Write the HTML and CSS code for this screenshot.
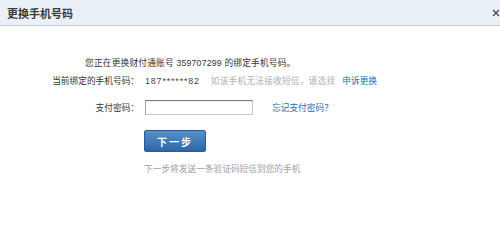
FILE: index.html
```html
<!DOCTYPE html>
<html lang="zh-CN">
<head>
<meta charset="utf-8">
<title>更换手机号码</title>
<link rel="stylesheet" href="styles.css">
</head>
<body>
<div class="dialog">
  <div class="hd">
    <span class="title">更换手机号码</span>
    <span class="close"><svg width="8" height="8" viewBox="0 0 8 8"><path d="M1 1L7 7M7 1L1 7" stroke="#4a4f57" stroke-width="1.4" fill="none"/></svg></span>
  </div>
  <div class="bd">
    <p class="intro">您正在更换财付通账号 359707299 的绑定手机号码。</p>
    <div class="row">
      <span class="label">当前绑定的手机号码：</span>
      <span class="val">187******82</span>
      <span class="tip">如该手机无法接收短信，请选择</span>
      <a class="link link-appeal" href="#">申诉更换</a>
    </div>
    <div class="row row-pwd">
      <span class="label">支付密码：</span>
      <input class="pwd" type="password">
      <a class="link link-forgot" href="#">忘记支付密码？</a>
    </div>
    <div class="actions"><button class="btn" type="button">下一步</button></div>
    <p class="note">下一步将发送一条验证码短信到您的手机</p>
  </div>
</div>
</body>
</html>
```
FILE: styles.css
```css
html, body {
  margin: 0;
  padding: 0;
  background: #fff;
}
body {
  font-family: "Liberation Sans", "Noto Sans CJK SC", sans-serif;
  font-size: 8.7px;
  color: #333;
  width: 500px;
  height: 232px;
  overflow: hidden;
}
.dialog {
  width: 500px;
}
.hd {
  height: 25px;
  background: #e9f0f8;
  border-bottom: 1px solid #c6c9cd;
  display: flex;
  align-items: center;
  justify-content: space-between;
  padding-left: 7px;
}
.title {
  font-size: 11px;
  font-weight: bold;
  color: #3a3a3a;
}
.close {
  display: flex;
  width: 8px;
  height: 8px;
  margin-right: 0;
}
.bd {
  padding-top: 29px;
}
.intro {
  margin: 0;
  padding-left: 85px;
  line-height: 17px;
  letter-spacing: 0.2px;
}
.row {
  display: flex;
  align-items: center;
  height: 17px;
}
.label {
  width: 139px;
  text-align: right;
  flex: none;
}
.val {
  margin-left: 6px;
  font-size: 9px;
  letter-spacing: 0.8px;
  color: #444;
}
.tip {
  margin-left: 11px;
  color: #b0b0b0;
  letter-spacing: 0.2px;
}
.link {
  color: #2a6aad;
  text-decoration: none;
}
.link-appeal {
  margin-left: 7px;
}
.row-pwd {
  margin-top: 11px;
  height: 15px;
}
.pwd {
  margin: 0 0 0 6px;
  padding: 0;
  width: 108px;
  height: 15px;
  box-sizing: border-box;
  border: 1px solid #c4c4c4;
  border-top-color: #7d7d7d;
  border-left-color: #a8a8a8;
  box-shadow: inset 0 1px 1px rgba(0,0,0,0.08);
  background: #fff;
  outline: none;
}
.link-forgot {
  margin-left: 19px;
}
.actions {
  margin-top: 15px;
  padding-left: 144px;
  display: flex;
}
.btn {
  width: 62px;
  height: 22px;
  padding: 0;
  border: 1px solid #2a5d94;
  border-radius: 2px;
  background: linear-gradient(#5590cb, #2f67a5);
  color: #fff;
  font-family: "Noto Sans CJK SC", sans-serif;
  font-size: 10px;
  font-weight: bold;
  letter-spacing: 2px;
  cursor: pointer;
}
.note {
  margin: 9px 0 0;
  padding-left: 144px;
  line-height: 17px;
  color: #a0a0a0;
}
```
